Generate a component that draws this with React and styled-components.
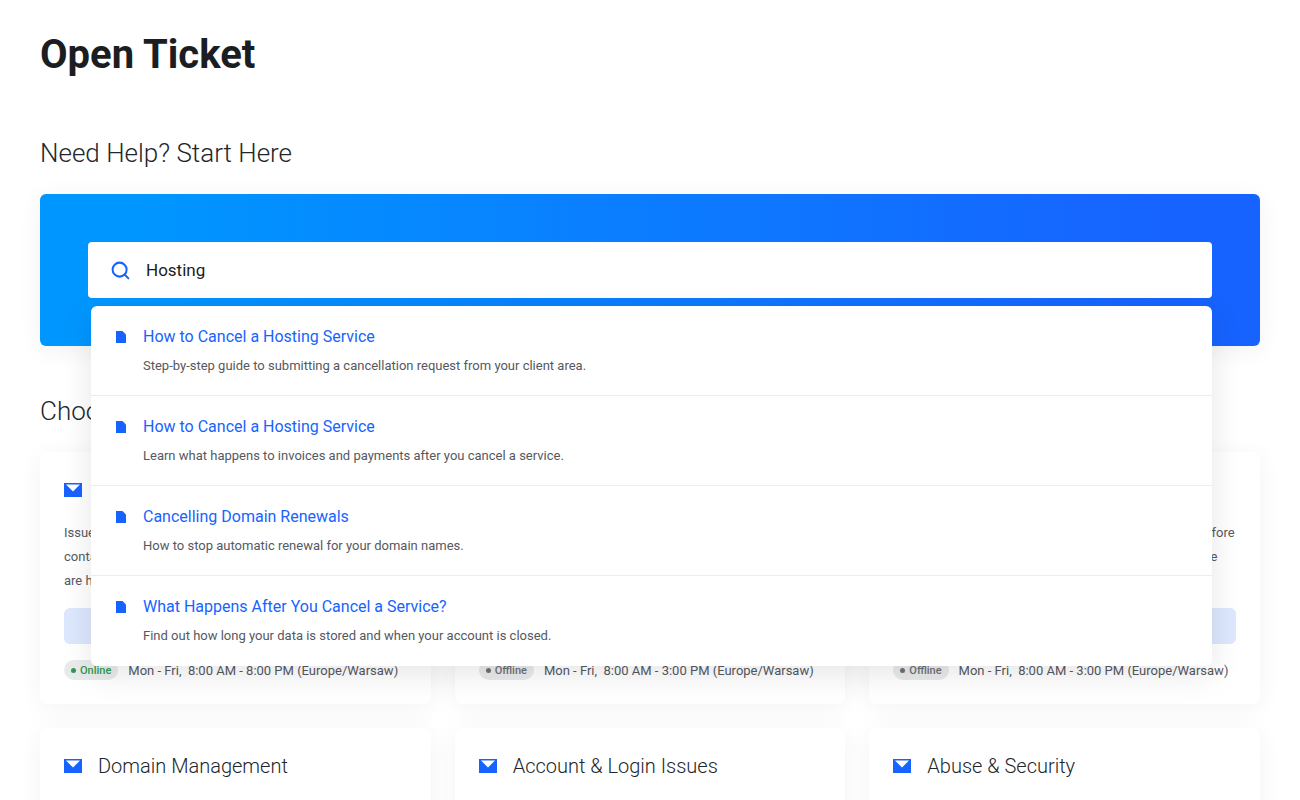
import styled, { createGlobalStyle } from 'styled-components';
import { Search } from 'lucide-react';

const ARTICLES = [
  { title: 'How to Cancel a Hosting Service', text: 'Step-by-step guide to submitting a cancellation request from your client area.' },
  { title: 'How to Cancel a Hosting Service', text: 'Learn what happens to invoices and payments after you cancel a service.' },
  { title: 'Cancelling Domain Renewals', text: 'How to stop automatic renewal for your domain names.' },
  { title: 'What Happens After You Cancel a Service?', text: 'Find out how long your data is stored and when your account is closed.' },
];

const DEPARTMENTS = [
  {
    title: 'Billing & Payments',
    text: 'Issues with invoices, payments or refunds? Read this first, contact our billing team with the details and all requests are handled within one business day.',
    online: true,
    hours: 'Mon - Fri,\u00a0 8:00 AM - 8:00 PM (Europe/Warsaw)',
  },
  {
    title: 'Technical Support',
    text: 'Problems with your hosting service, server or website. Please describe the issue and tell us what you have tried so that our team can help you faster.',
    online: false,
    hours: 'Mon - Fri,\u00a0 8:00 AM - 3:00 PM (Europe/Warsaw)',
  },
  {
    title: 'Sales Questions',
    text: 'Questions about your plans? Please, read the guides before you write in and tell us which plans you would like to use and where your site is hosted.',
    online: false,
    hours: 'Mon - Fri,\u00a0 8:00 AM - 3:00 PM (Europe/Warsaw)',
  },
];

const MORE_DEPARTMENTS = ['Domain Management', 'Account & Login Issues', 'Abuse & Security'];

const IconMail = () => (
  <MailSvg viewBox="0 0 18 14" width="18" height="14">
    <rect width="18" height="14" fill="#1763ff" />
    <polygon points="2,1.5 16,1.5 9,8.5" fill="#fff" />
  </MailSvg>
);

const IconDoc = () => (
  <DocSvg viewBox="0 0 10 12" width="10" height="12">
    <polygon points="0,0 6.5,0 10,3.5 10,12 0,12" fill="#1763ff" />
  </DocSvg>
);

const App = () => (
  <Page>
    <GlobalStyle />
    <PageTitle>Open Ticket</PageTitle>
    <SectionTitle>Need Help? Start Here</SectionTitle>
    <Banner>
      <SearchBar>
        <Search size={21} color="#1763ff" strokeWidth={2.3} />
        <SearchValue>Hosting</SearchValue>
      </SearchBar>
      <Dropdown>
        {ARTICLES.map((item, i) => (
          <Article key={i}>
            <IconDoc />
            <div>
              <ArticleLink>{item.title}</ArticleLink>
              <ArticleText>{item.text}</ArticleText>
            </div>
          </Article>
        ))}
      </Dropdown>
    </Banner>
    <ChooseTitle>Choose Department</ChooseTitle>
    <CardGrid>
      {DEPARTMENTS.map((dep) => (
        <Card key={dep.title}>
          <CardHead>
            <IconMail />
            <CardTitle>{dep.title}</CardTitle>
          </CardHead>
          <CardText>{dep.text}</CardText>
          <CardButton>Open Ticket</CardButton>
          <CardFoot>
            <Status $online={dep.online}>{dep.online ? 'Online' : 'Offline'}</Status>
            <Hours>{dep.hours}</Hours>
          </CardFoot>
        </Card>
      ))}
      {MORE_DEPARTMENTS.map((title) => (
        <Card key={title}>
          <CardHead>
            <IconMail />
            <CardTitle>{title}</CardTitle>
          </CardHead>
        </Card>
      ))}
    </CardGrid>
  </Page>
);

const GlobalStyle = createGlobalStyle`
  html, body {
    margin: 0;
    height: 800px;
    overflow: hidden;
    background: #fff;
  }
  body {
    font-family: Roboto, "Liberation Sans", sans-serif;
    color: #1a1d21;
  }
`;

const Page = styled.div`
  padding: 28px 40px 0;
`;

const PageTitle = styled.h1`
  margin: 0;
  font-size: 40px;
  line-height: 54px;
  font-weight: 700;
  color: #1a1d21;
`;

const SectionTitle = styled.h2`
  margin: 53px 0 23px;
  font-size: 26px;
  line-height: 36px;
  font-weight: 300;
  color: #22262b;
`;

const ChooseTitle = styled(SectionTitle)`
  margin: 47px 0 23px;
`;

const Banner = styled.div`
  position: relative;
  padding: 48px;
  height: 152px;
  box-sizing: border-box;
  border-radius: 6px;
  background: linear-gradient(90deg, #0096ff 8%, #1763ff 92%);
  box-shadow: 0 4px 24px rgba(0, 0, 0, 0.06);
`;

const SearchBar = styled.div`
  display: flex;
  align-items: center;
  gap: 15px;
  height: 56px;
  padding: 0 22px;
  box-sizing: border-box;
  background: #fff;
  border-radius: 4px;
`;

const SearchValue = styled.span`
  font-size: 17px;
  color: #1a1d21;
`;

const Dropdown = styled.div`
  position: absolute;
  z-index: 2;
  top: 112px;
  left: 51px;
  right: 48px;
  background: #fff;
  border-radius: 6px;
  box-shadow: 0 8px 32px rgba(0, 0, 0, 0.1);
`;

const Article = styled.div`
  display: flex;
  gap: 17px;
  height: 90px;
  padding: 20px 25px 0;
  box-sizing: border-box;
  border-bottom: 1px solid #ececee;

  &:last-child {
    border-bottom: none;
  }
`;

const DocSvg = styled.svg`
  flex-shrink: 0;
  margin-top: 5px;
`;

const ArticleLink = styled.div`
  font-size: 16px;
  line-height: 22px;
  color: #1763ff;
`;

const ArticleText = styled.div`
  margin-top: 8px;
  font-size: 13px;
  line-height: 20px;
  color: #55595f;
`;

const CardGrid = styled.div`
  display: grid;
  grid-template-columns: repeat(3, 1fr);
  gap: 24px;
`;

const Card = styled.div`
  padding: 24px;
  box-sizing: border-box;
  height: 252px;
  background: #fff;
  border-radius: 8px;
  box-shadow: 0 4px 24px rgba(0, 0, 0, 0.05);
`;

const CardHead = styled.div`
  display: flex;
  align-items: center;
  gap: 16px;
  height: 28px;
`;

const MailSvg = styled.svg`
  flex-shrink: 0;
`;

const CardTitle = styled.div`
  font-size: 20px;
  font-weight: 300;
  color: #22262b;
`;

const CardText = styled.p`
  margin: 17px 0 0;
  font-size: 13px;
  line-height: 24px;
  color: #55595f;
`;

const CardButton = styled.div`
  display: flex;
  align-items: center;
  justify-content: center;
  height: 36px;
  margin-top: 15px;
  border-radius: 6px;
  background: #dde7fd;
  color: #1763ff;
  font-size: 14px;
  font-weight: 500;
`;

const CardFoot = styled.div`
  display: flex;
  align-items: center;
  gap: 10px;
  margin-top: 16px;
`;

const Status = styled.span`
  display: inline-flex;
  align-items: center;
  gap: 4px;
  height: 20px;
  padding: 0 7px;
  border-radius: 10px;
  background: #e9eaeb;
  font-size: 11px;
  font-weight: 500;
  color: ${({ $online }) => ($online ? '#2f9a4f' : '#6d7176')};

  &::before {
    content: '';
    width: 5px;
    height: 5px;
    border-radius: 50%;
    background: currentColor;
  }
`;

const Hours = styled.span`
  font-size: 13px;
  color: #55595f;
`;

export default App;
